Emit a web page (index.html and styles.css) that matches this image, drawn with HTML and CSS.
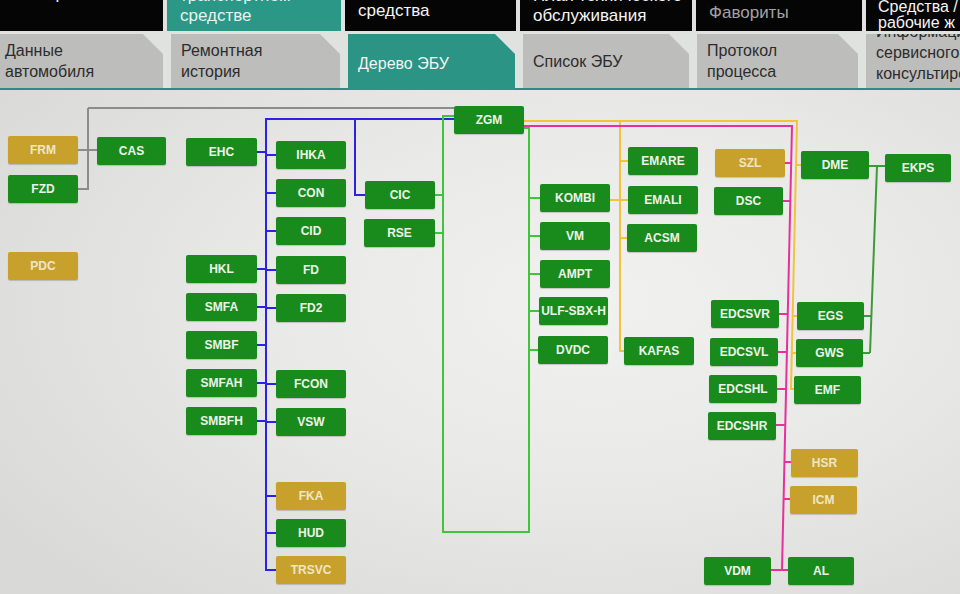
FILE: index.html
```html
<!DOCTYPE html>
<html lang="ru">
<head>
<meta charset="utf-8">
<title>Дерево ЭБУ</title>
<link rel="stylesheet" href="styles.css">
</head>
<body>
<header class="header">
  <nav class="top-tabs">
    <div class="top-tab top-tab--w1 top-tab--high">Операции<br>по обработке</div>
    <div class="top-tab top-tab--active top-tab--w2">Сведения о<br>транспортном<br>средстве</div>
    <div class="top-tab top-tab--w3 top-tab--mid">Технический<br>осмотр<br>средства</div>
    <div class="top-tab top-tab--w4">План технического<br>обслуживания</div>
    <div class="top-tab top-tab--w5 top-tab--muted">Фавориты</div>
    <div class="top-tab top-tab--w6 top-tab--top">Средства /<br>рабочие ж</div>
  </nav>
  <nav class="sub-tabs">
    <div class="sub-tab sub-tab--w1">Данные<br>автомобиля</div>
    <div class="sub-tab sub-tab--w2">Ремонтная<br>история</div>
    <div class="sub-tab sub-tab--active sub-tab--w3">Дерево ЭБУ</div>
    <div class="sub-tab sub-tab--w4">Список ЭБУ</div>
    <div class="sub-tab sub-tab--w5">Протокол<br>процесса</div>
    <div class="sub-tab sub-tab--w6 sub-tab--bottom">Информация<br>сервисного<br>консультиро</div>
  </nav>
  <div class="rule"></div>
</header>
<main class="tree">
  <svg class="wires" width="960" height="504" viewBox="0 90 960 504" aria-hidden="true">
    <g class="w-grey">
      <path d="M88 108 H454"/>
      <path d="M78 189 H88 V108"/>
      <path d="M78 150 H97"/>
    </g>
    <g class="w-blue">
      <path d="M454 119 H266 V570 H276"/>
      <path d="M355 119 V195 H365"/>
      <path d="M266 155 H276 M266 193 H276 M266 231 H276 M266 270 H276 M266 308 H276 M266 384 H276 M266 422 H276 M266 496 H276 M266 533 H276"/>
      <path d="M257 152 H266 M257 269 H266 M257 307 H266 M257 345 H266 M257 383 H266 M257 421 H266"/>
    </g>
    <g class="w-green">
      <path d="M454 116 H443 V532 H529 V128 H524"/>
      <path d="M435 195 H443 M435 233 H443"/>
      <path d="M529 198 H540 M529 236 H540 M529 274 H540 M529 311 H539 M529 350 H538"/>
    </g>
    <g class="w-yellow">
      <path d="M524 121 H797 L791 389 H794"/>
      <path d="M620 121 V351 H624"/>
      <path d="M620 161 H628 M610 200 H628 M620 238 H627"/>
      <path d="M796 165 H801 M793 316 H797 M792 353 H796"/>
    </g>
    <g class="w-pink">
      <path d="M524 126 H792 L782 570"/>
      <path d="M785 163 H791 M783 201 H790 M779 314 H788 M778 352 H787 M777 389 H786 M776 425 H785"/>
      <path d="M784 462 H791 M784 499 H790 M771 570 H788"/>
    </g>
    <g class="w-dark">
      <path d="M869 166 H885"/>
      <path d="M877 166 L870 353"/>
      <path d="M864 316 H871 M863 353 H870"/>
    </g>
  </svg>

  <div class="ecu ecu--y" style="left:8px;top:46px;width:70px">FRM</div>
  <div class="ecu" style="left:8px;top:85px;width:70px">FZD</div>
  <div class="ecu" style="left:97px;top:47px;width:69px">CAS</div>
  <div class="ecu ecu--y" style="left:8px;top:162px;width:70px">PDC</div>

  <div class="ecu" style="left:186px;top:48px;width:71px">EHC</div>
  <div class="ecu" style="left:186px;top:165px;width:71px">HKL</div>
  <div class="ecu" style="left:186px;top:203px;width:71px">SMFA</div>
  <div class="ecu" style="left:186px;top:241px;width:71px">SMBF</div>
  <div class="ecu" style="left:186px;top:279px;width:71px">SMFAH</div>
  <div class="ecu" style="left:186px;top:317px;width:71px">SMBFH</div>

  <div class="ecu" style="left:276px;top:51px;width:70px">IHKA</div>
  <div class="ecu" style="left:276px;top:89px;width:70px">CON</div>
  <div class="ecu" style="left:276px;top:127px;width:70px">CID</div>
  <div class="ecu" style="left:276px;top:166px;width:70px">FD</div>
  <div class="ecu" style="left:276px;top:204px;width:70px">FD2</div>
  <div class="ecu" style="left:276px;top:280px;width:70px">FCON</div>
  <div class="ecu" style="left:276px;top:318px;width:70px">VSW</div>
  <div class="ecu ecu--y" style="left:276px;top:392px;width:70px">FKA</div>
  <div class="ecu" style="left:276px;top:429px;width:70px">HUD</div>
  <div class="ecu ecu--y" style="left:276px;top:466px;width:70px">TRSVC</div>

  <div class="ecu" style="left:365px;top:91px;width:70px">CIC</div>
  <div class="ecu" style="left:364px;top:129px;width:71px">RSE</div>

  <div class="ecu" style="left:454px;top:16px;width:70px">ZGM</div>

  <div class="ecu" style="left:540px;top:94px;width:70px">KOMBI</div>
  <div class="ecu" style="left:540px;top:132px;width:70px">VM</div>
  <div class="ecu" style="left:540px;top:170px;width:70px">AMPT</div>
  <div class="ecu" style="left:539px;top:207px;width:69px">ULF-SBX-H</div>
  <div class="ecu" style="left:538px;top:246px;width:70px">DVDC</div>

  <div class="ecu" style="left:628px;top:57px;width:70px">EMARE</div>
  <div class="ecu" style="left:628px;top:96px;width:70px">EMALI</div>
  <div class="ecu" style="left:627px;top:134px;width:70px">ACSM</div>
  <div class="ecu" style="left:624px;top:247px;width:70px">KAFAS</div>

  <div class="ecu ecu--y" style="left:715px;top:59px;width:70px">SZL</div>
  <div class="ecu" style="left:714px;top:97px;width:69px">DSC</div>
  <div class="ecu" style="left:711px;top:210px;width:68px">EDCSVR</div>
  <div class="ecu" style="left:710px;top:248px;width:68px">EDCSVL</div>
  <div class="ecu" style="left:709px;top:285px;width:68px">EDCSHL</div>
  <div class="ecu" style="left:708px;top:322px;width:68px">EDCSHR</div>
  <div class="ecu" style="left:704px;top:467px;width:67px">VDM</div>

  <div class="ecu" style="left:801px;top:61px;width:68px">DME</div>
  <div class="ecu" style="left:885px;top:64px;width:66px">EKPS</div>
  <div class="ecu" style="left:797px;top:212px;width:67px">EGS</div>
  <div class="ecu" style="left:796px;top:249px;width:67px">GWS</div>
  <div class="ecu" style="left:794px;top:286px;width:67px">EMF</div>
  <div class="ecu ecu--y" style="left:791px;top:359px;width:67px">HSR</div>
  <div class="ecu ecu--y" style="left:790px;top:396px;width:67px">ICM</div>
  <div class="ecu" style="left:788px;top:467px;width:66px">AL</div>
</main>
</body>
</html>
```

FILE: styles.css
```css
* {
  box-sizing: border-box;
}

html, body {
  margin: 0;
  padding: 0;
}

body {
  width: 960px;
  height: 594px;
  overflow: hidden;
  background: #e0e2e0;
  font-family: "Liberation Sans", Arial, sans-serif;
}

.header {
  display: flex;
  flex-direction: column;
  background: #e0e2e0;
}

/* ---- top navigation row ---- */
.top-tabs {
  display: flex;
  gap: 4px;
  height: 31px;
}

.top-tab {
  display: flex;
  flex-direction: column;
  justify-content: flex-end;
  overflow: hidden;
  padding: 0 0 5px 13px;
  background: #050505;
  color: #f4f4f4;
  font-size: 17px;
  line-height: 20px;
  white-space: nowrap;
}

.top-tab--w1 { width: 163px; }
.top-tab--w2 { width: 174px; }
.top-tab--w3 { width: 171px; }
.top-tab--w4 { width: 172px; }
.top-tab--w5 { width: 166px; }
.top-tab--w6 { flex: 1; }

.top-tab--high {
  padding-bottom: 27px;
}

.top-tab--mid {
  padding-bottom: 10px;
}

.top-tab--active {
  background: #2b9787;
  color: #e8f4f0;
}

.top-tab--muted {
  color: #a2a2a2;
  padding-bottom: 8px;
}

.top-tab--top {
  padding: 0 0 0 12px;
  font-size: 16px;
  line-height: 16px;
}

/* ---- second navigation row ---- */
.sub-tabs {
  display: flex;
  gap: 8px;
  height: 54px;
  margin-top: 3px;
}

.sub-tab {
  display: flex;
  align-items: center;
  overflow: hidden;
  padding: 0 10px;
  background: #bdbdbc;
  color: #2c2c2c;
  font-size: 16px;
  line-height: 21px;
  clip-path: polygon(0 0, calc(100% - 20px) 0, 100% 20px, 100% 100%, 0 100%);
}

.sub-tab--w1 { width: 163px; padding-left: 5px; }
.sub-tab--w2 { width: 169px; }
.sub-tab--w3 { width: 167px; }
.sub-tab--w4 { width: 166px; }
.sub-tab--w5 { width: 161px; }
.sub-tab--w6 { flex: 1; clip-path: none; }

.sub-tab--active {
  background: #2b9484;
  color: #f2f6f4;
  height: 56px;
  padding-top: 2px;
}

.sub-tab--bottom {
  align-items: flex-end;
  padding-bottom: 4px;
}

.rule {
  height: 2px;
  background: #2f8a82;
}

/* ---- ECU tree canvas ---- */
.tree {
  position: relative;
  height: 504px;
  background:
    radial-gradient(ellipse 75% 80% at 62% 42%, #f1f1ef 0%, #e9e9e7 45%, #d9d9d7 100%);
}

.wires {
  position: absolute;
  left: 0;
  top: 0;
  display: block;
}

.wires path {
  fill: none;
  stroke-width: 2;
}

.w-grey path { stroke: #8c8c8e; }
.w-blue path { stroke: #2a22e6; }
.w-green path { stroke: #3fc43a; }
.w-yellow path { stroke: #f2c43a; }
.w-pink path { stroke: #e8309c; }
.w-dark path { stroke: #3d9a3b; }

.ecu {
  position: absolute;
  height: 28px;
  display: flex;
  align-items: center;
  justify-content: center;
  background: #198b1d;
  color: #eef3ea;
  font-size: 12px;
  font-weight: bold;
  border-radius: 2px;
  box-shadow: 0 1px 1px rgba(0, 0, 0, 0.18);
  white-space: nowrap;
}

.ecu--y {
  background: #c8a12c;
  color: #efe6c8;
}
```
